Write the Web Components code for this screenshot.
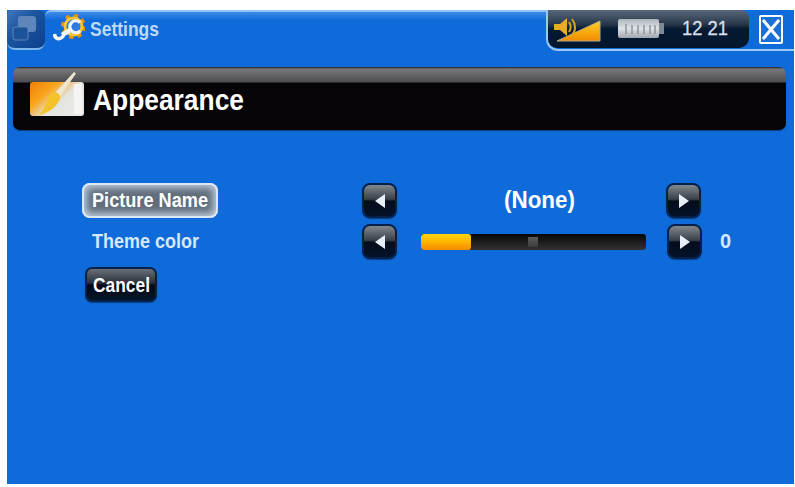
<!DOCTYPE html>
<html>
<head>
<meta charset="utf-8">
<title>Settings - Appearance</title>
<style>
  html, body { margin: 0; padding: 0; background: #fff; }
  body { font-family: "Liberation Sans", Arial, sans-serif; font-weight: 700; }
</style>
</head>
<body>
<device-screen>
  <top-bar title="Settings" time="12 21"></top-bar>
  <title-panel><fit-text width="151" style="font-size:30px">Appearance</fit-text></title-panel>
  <settings-form>
    <form-row>
      <menu-label slot="label" selected><fit-text width="116">Picture Name</fit-text></menu-label>
      <arrow-button slot="prev" dir="left"></arrow-button>
      <fit-text slot="value" width="71" style="font-size:23px;color:#fff;margin-left:16px">(None)</fit-text>
      <arrow-button slot="next" dir="right"></arrow-button>
    </form-row>
    <form-row>
      <menu-label slot="label"><fit-text width="107">Theme color</fit-text></menu-label>
      <arrow-button slot="prev" dir="left"></arrow-button>
      <value-slider slot="value" style="margin-left:4px"></value-slider>
      <arrow-button slot="next" dir="right" style="margin-left:1px"></arrow-button>
      <span slot="extra" style="font-size:20px;color:#d6e8fc">0</span>
    </form-row>
    <cancel-button><fit-text width="57" style="font-size:21px">Cancel</fit-text></cancel-button>
  </settings-form>
</device-screen>

<script>
  class DeviceScreen extends HTMLElement {
    constructor() {
      super();
      this.attachShadow({ mode: 'open' });
      this.shadowRoot.innerHTML = `
        <style>
          :host {
            display: flex;
            flex-direction: column;
            box-sizing: border-box;
            width: 787px;
            height: 474px;
            margin: 10px 1px 3px 7px;
            background: #0f6bd9;
            overflow: hidden;
          }
        </style>
        <slot></slot>
      `;
    }
  }

  class TopBar extends HTMLElement {
    constructor() {
      super();
      this.attachShadow({ mode: 'open' });
    }

    connectedCallback() {
      const title = this.getAttribute('title');
      const time = this.getAttribute('time');
      this.shadowRoot.innerHTML = `
        <style>
          :host { display: flex; height: 41px; flex: none; }
          .tile {
            width: 38px;
            height: 40px;
            box-sizing: border-box;
            background: linear-gradient(135deg, #4378bd, #1a559f 40%, #0c3f8c);
            border-radius: 5px 6px 8px 8px;
            border-bottom: 2px solid #7db4ea;
            flex: none;
          }
          .tile svg { display: block; }
          .heading {
            flex: 1;
            display: flex;
            align-items: center;
            gap: 5px;
            padding: 0 0 6px 8px;
            border-top: 2px solid #8fc2f2;
            border-top-left-radius: 6px;
            background: linear-gradient(#3f8ae6, #0f6bd9 8px);
          }
          .heading fit-text {
            font-size: 21px;
            color: #bcd9f6;
          }
          .status-wrap {
            width: 248px;
            flex: none;
            display: flex;
            box-sizing: border-box;
            border-bottom: 2px solid #9ac8f3;
            border-left: 2px solid #9ac8f3;
            border-bottom-left-radius: 12px;
            height: 41px;
            margin-left: -2px;
          }
          .status {
            width: 201px;
            height: 38px;
            box-sizing: border-box;
            background: linear-gradient(#59677a, #27364a 38%, #041a33 50%, #03162c);
            border-radius: 0 8px 10px 9px;
            display: flex;
            align-items: center;
            padding: 0 0 1px 5px;
          }
          .time {
            font-size: 20px;
            font-weight: 400;
            -webkit-text-stroke: 0.3px #d8dfe7;
            color: #d8dfe7;
            margin-left: 17px;
          }
          .close {
            width: 24px;
            height: 29px;
            box-sizing: border-box;
            border: 2px solid #fff;
            border-radius: 2px;
            margin: 5px 0 0 10px;
            background: #1a70d6;
            display: flex;
            align-items: center;
            justify-content: center;
          }
        </style>
        <div class="tile">
          <svg width="38" height="38" viewBox="0 0 38 38">
            <rect x="11" y="6" width="18" height="16" rx="3" fill="#5f86bb"/>
            <rect x="6" y="17" width="15" height="13" rx="2" fill="#1d5399" stroke="#5f86bb" stroke-width="1"/>
          </svg>
        </div>
        <div class="heading">
          <svg width="32" height="30" viewBox="0 0 32 30">
            <circle cx="20.500" cy="12.500" r="10.500" fill="none" stroke="#e8920f" stroke-width="4" stroke-dasharray="4.100 4.150"/>
            <circle cx="20.500" cy="12.500" r="8.500" fill="#2a7ce0" stroke="#ffc62e" stroke-width="3"/>
            <path d="M27 8.500A6 6 0 1 0 27 17" fill="none" stroke="#f2f6fb" stroke-width="3.200"/>
            <path d="M9 21l10-6" stroke="#f2f6fb" stroke-width="4.500"/>
            <path d="M1.500 20C2 26 8 26 10.500 21.500" fill="none" stroke="#f2f6fb" stroke-width="3.500"/>
          </svg>
          <fit-text width="69">${title}</fit-text>
        </div>
        <div class="status-wrap">
          <div class="status">
            <svg width="50" height="26" viewBox="0 0 50 26">
              <defs>
                <linearGradient id="vol" x1="0" y1="0" x2="0" y2="1">
                  <stop offset="0" stop-color="#ffd21e"/>
                  <stop offset="1" stop-color="#f08a00"/>
                </linearGradient>
              </defs>
              <path d="M4 25L47 5v20z" fill="url(#vol)" stroke="#b9a98a" stroke-width="1"/>
              <path d="M1 8h6l7-6v18l-7-6H1z" fill="#e8ac22"/>
              <path d="M16 6c2 3 2 7 0 10M19 3c4 5 4 12 0 16" fill="none" stroke="#d8a41e" stroke-width="2"/>
            </svg>
            <svg width="47" height="20" viewBox="0 0 47 20" style="margin-left:15px">
              <defs>
                <linearGradient id="bat" x1="0" y1="0" x2="0" y2="1">
                  <stop offset="0" stop-color="#aeb5bc"/>
                  <stop offset=".5" stop-color="#dfe3e6"/>
                  <stop offset="1" stop-color="#9ea6ad"/>
                </linearGradient>
              </defs>
              <rect x="0" y="0" width="41" height="19" rx="2" fill="url(#bat)"/>
              <rect x="41" y="4" width="5" height="11" fill="#7f8a93"/>
              <path d="M8 5v10M14 6v9M20 6v9M26 6v9M32 6v9M37 6v9" stroke="#8d959d" stroke-width="1.500"/>
            </svg>
            <fit-text class="time" width="46">${time}</fit-text>
          </div>
          <div class="close">
            <svg width="18" height="23" viewBox="0 0 18 23">
              <path d="M1 2l16 19M17 2L1 21" stroke="#fff" stroke-width="3"/>
            </svg>
          </div>
        </div>
      `;
    }
  }

  class TitlePanel extends HTMLElement {
    constructor() {
      super();
      this.attachShadow({ mode: 'open' });
      this.shadowRoot.innerHTML = `
        <style>
          :host {
            display: flex;
            align-items: center;
            flex: none;
            box-sizing: border-box;
            width: 773px;
            height: 63px;
            margin: 16px 0 0 6px;
            padding: 2px 0 0 17px;
            gap: 7px;
            border-radius: 7px;
            background: linear-gradient(#1c1c1e, #77787a 2px, #4d4d4f 15px, #060406 16px, #060406);
            color: #fff;
            box-shadow: 0 1px 1px #0a3f86;
          }
          svg { margin-top: -9px; }
        </style>
        <svg width="56" height="46" viewBox="0 0 56 46">
          <defs>
            <linearGradient id="pad" x1="0" y1="0" x2="1" y2=".7">
              <stop offset="0" stop-color="#f07f08"/>
              <stop offset=".35" stop-color="#f9a51a"/>
              <stop offset=".65" stop-color="#e4e4e0"/>
              <stop offset="1" stop-color="#e8e8e5"/>
            </linearGradient>
          </defs>
          <rect x="0" y="10" width="54" height="34" rx="3" fill="url(#pad)"/>
          <path d="M44 12h8v30h-8z" fill="#f4f4f2"/>
          <path d="M24 22L44 0l2 1.500L29 26z" fill="#efe6cf"/>
          <path d="M24 20c4 0 7 3 6 7-3 7-9 13-21 16 4-4 6-9 8-14 1-4 3-8 7-9z" fill="#f4c22a"/>
        </svg>
        <slot></slot>
      `;
    }
  }

  class SettingsForm extends HTMLElement {
    constructor() {
      super();
      this.attachShadow({ mode: 'open' });
      this.shadowRoot.innerHTML = `
        <style>
          :host {
            display: flex;
            flex-direction: column;
            align-items: flex-start;
            gap: 6px;
            padding: 53px 0 0 75px;
          }
          ::slotted(cancel-button) { margin-top: 2px; }
        </style>
        <slot></slot>
      `;
    }
  }

  class FormRow extends HTMLElement {
    constructor() {
      super();
      this.attachShadow({ mode: 'open' });
      this.shadowRoot.innerHTML = `
        <style>
          :host {
            display: grid;
            grid-template-columns: 280px 35px 269px 36px auto;
            align-items: center;
            height: 35px;
          }
          .value { display: flex; justify-content: center; }
          .extra { padding-left: 18px; }
        </style>
        <div><slot name="label"></slot></div>
        <div><slot name="prev"></slot></div>
        <div class="value"><slot name="value"></slot></div>
        <div><slot name="next"></slot></div>
        <div class="extra"><slot name="extra"></slot></div>
      `;
    }
  }

  class MenuLabel extends HTMLElement {
    constructor() {
      super();
      this.attachShadow({ mode: 'open' });
      this.shadowRoot.innerHTML = `
        <style>
          :host {
            display: inline-flex;
            align-items: center;
            box-sizing: border-box;
            height: 35px;
            padding: 0 10px;
            font-size: 20px;
            color: #d6e8fc;
            border-radius: 8px;
          }
          :host([selected]) {
            color: #fff;
            background: #616d7b;
            box-shadow: inset 0 0 0 2px #dbe7f5, inset 0 0 7px 5px #bccbdc;
          }
        </style>
        <slot></slot>
      `;
    }
  }

  class ArrowButton extends HTMLElement {
    constructor() {
      super();
      this.attachShadow({ mode: 'open' });
    }

    connectedCallback() {
      const points = this.getAttribute('dir') === 'left' ? '10,0 10,14 0,7' : '0,0 0,14 10,7';
      this.shadowRoot.innerHTML = `
        <style>
          :host {
            display: flex;
            align-items: center;
            justify-content: center;
            box-sizing: border-box;
            width: 35px;
            height: 35px;
            border-radius: 8px;
            border: 2px solid #03214a;
            background: linear-gradient(#82878d, #3a4049 46%, #050d1c 52%, #04122a);
            box-shadow: 0 1px 1px #0a3f86;
          }
        </style>
        <svg width="10" height="14" viewBox="0 0 10 14"><polygon points="${points}" fill="#e6eef6"/></svg>
      `;
    }
  }

  class ValueSlider extends HTMLElement {
    constructor() {
      super();
      this.attachShadow({ mode: 'open' });
      this.shadowRoot.innerHTML = `
        <style>
          :host {
            display: flex;
            position: relative;
            width: 225px;
            height: 16px;
            border-radius: 3px;
            overflow: hidden;
            background: linear-gradient(#060606, #333);
          }
          .fill {
            width: 50px;
            background: linear-gradient(#ffd60a, #ffb400 50%, #f58a00);
            border-radius: 3px;
          }
          .thumb {
            position: absolute;
            left: 107px;
            top: 3px;
            width: 10px;
            height: 10px;
            background: linear-gradient(#5a5a5a, #3c3c3c);
          }
        </style>
        <div class="fill"></div>
        <div class="thumb"></div>
      `;
    }
  }

  class CancelButton extends HTMLElement {
    constructor() {
      super();
      this.attachShadow({ mode: 'open' });
      this.shadowRoot.innerHTML = `
        <style>
          :host {
            display: inline-flex;
            align-items: center;
            justify-content: center;
            box-sizing: border-box;
            width: 72px;
            height: 35px;
            margin-left: 3px;
            border-radius: 7px;
            border: 2px solid #03214a;
            color: #fff;
            background: linear-gradient(#6a7078, #2a323d 44%, #030a18 52%, #04142a);
            box-shadow: 0 1px 1px #0a3f86;
          }
        </style>
        <slot></slot>
      `;
    }
  }

  // Squeezes its text horizontally to a given width (the device font is a condensed one)
  class FitText extends HTMLElement {
    constructor() {
      super();
      this.attachShadow({ mode: 'open' });
      this.shadowRoot.innerHTML = `
        <style>
          :host { display: inline-block; white-space: nowrap; }
          span { display: inline-block; transform-origin: left center; }
        </style>
        <span><slot></slot></span>
      `;
    }

    connectedCallback() {
      const width = Number(this.getAttribute('width'));
      const inner = this.shadowRoot.querySelector('span');
      this.style.width = width + 'px';
      inner.style.transform = `scaleX(${width / inner.getBoundingClientRect().width})`;
    }
  }

  customElements.define('device-screen', DeviceScreen);
  customElements.define('top-bar', TopBar);
  customElements.define('title-panel', TitlePanel);
  customElements.define('settings-form', SettingsForm);
  customElements.define('form-row', FormRow);
  customElements.define('menu-label', MenuLabel);
  customElements.define('arrow-button', ArrowButton);
  customElements.define('value-slider', ValueSlider);
  customElements.define('cancel-button', CancelButton);
  customElements.define('fit-text', FitText);
</script>
</body>
</html>
